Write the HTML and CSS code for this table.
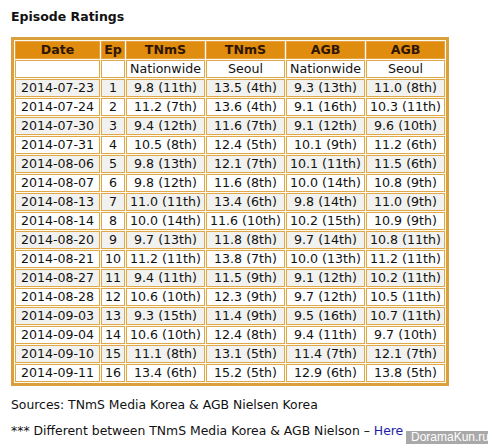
FILE: index.html
```html
<!DOCTYPE html>
<html lang="en">
<head>
  <meta charset="UTF-8" />
  <title>Episode Ratings</title>
  <link rel="stylesheet" href="styles.css">
</head>
<body>
  <div class="page">
    <h3 class="title">Episode Ratings</h3>

    <table class="ratings">
      <tr class="head">
        <th class="c-date">Date</th>
        <th class="c-ep">Ep</th>
        <th class="c-val">TNmS</th>
        <th class="c-val">TNmS</th>
        <th class="c-val">AGB</th>
        <th class="c-val">AGB</th>
      </tr>
      <tr class="sub">
        <td></td>
        <td></td>
        <td>Nationwide</td>
        <td>Seoul</td>
        <td>Nationwide</td>
        <td>Seoul</td>
      </tr>
      <tr class="odd"><td>2014-07-23</td><td>1</td><td>9.8 (11th)</td><td>13.5 (4th)</td><td>9.3 (13th)</td><td>11.0 (8th)</td></tr>
      <tr><td>2014-07-24</td><td>2</td><td>11.2 (7th)</td><td>13.6 (4th)</td><td>9.1 (16th)</td><td>10.3 (11th)</td></tr>
      <tr class="odd"><td>2014-07-30</td><td>3</td><td>9.4 (12th)</td><td>11.6 (7th)</td><td>9.1 (12th)</td><td>9.6 (10th)</td></tr>
      <tr><td>2014-07-31</td><td>4</td><td>10.5 (8th)</td><td>12.4 (5th)</td><td>10.1 (9th)</td><td>11.2 (6th)</td></tr>
      <tr class="odd"><td>2014-08-06</td><td>5</td><td>9.8 (13th)</td><td>12.1 (7th)</td><td>10.1 (11th)</td><td>11.5 (6th)</td></tr>
      <tr><td>2014-08-07</td><td>6</td><td>9.8 (12th)</td><td>11.6 (8th)</td><td>10.0 (14th)</td><td>10.8 (9th)</td></tr>
      <tr class="odd"><td>2014-08-13</td><td>7</td><td>11.0 (11th)</td><td>13.4 (6th)</td><td>9.8 (14th)</td><td>11.0 (9th)</td></tr>
      <tr><td>2014-08-14</td><td>8</td><td>10.0 (14th)</td><td>11.6 (10th)</td><td>10.2 (15th)</td><td>10.9 (9th)</td></tr>
      <tr class="odd"><td>2014-08-20</td><td>9</td><td>9.7 (13th)</td><td>11.8 (8th)</td><td>9.7 (14th)</td><td>10.8 (11th)</td></tr>
      <tr><td>2014-08-21</td><td>10</td><td>11.2 (11th)</td><td>13.8 (7th)</td><td>10.0 (13th)</td><td>11.2 (11th)</td></tr>
      <tr class="odd"><td>2014-08-27</td><td>11</td><td>9.4 (11th)</td><td>11.5 (9th)</td><td>9.1 (12th)</td><td>10.2 (11th)</td></tr>
      <tr><td>2014-08-28</td><td>12</td><td>10.6 (10th)</td><td>12.3 (9th)</td><td>9.7 (12th)</td><td>10.5 (11th)</td></tr>
      <tr class="odd"><td>2014-09-03</td><td>13</td><td>9.3 (15th)</td><td>11.4 (9th)</td><td>9.5 (16th)</td><td>10.7 (11th)</td></tr>
      <tr><td>2014-09-04</td><td>14</td><td>10.6 (10th)</td><td>12.4 (8th)</td><td>9.4 (11th)</td><td>9.7 (10th)</td></tr>
      <tr class="odd"><td>2014-09-10</td><td>15</td><td>11.1 (8th)</td><td>13.1 (5th)</td><td>11.4 (7th)</td><td>12.1 (7th)</td></tr>
      <tr><td>2014-09-11</td><td>16</td><td>13.4 (6th)</td><td>15.2 (5th)</td><td>12.9 (6th)</td><td>13.8 (5th)</td></tr>
    </table>

    <p class="note">Sources: TNmS Media Korea &amp; AGB Nielsen Korea</p>
    <p class="note">*** Different between TNmS Media Korea &amp; AGB Nielson &ndash; <a href="#">Here</a></p>
  </div>

  <div class="watermark">DoramaKun.ru</div>
</body>
</html>
```

FILE: styles.css
```css
body {
  margin: 0;
  padding: 0;
  background: #fff;
  font-family: "DejaVu Sans", Verdana, sans-serif;
  font-size: 13px;
  color: #111;
}

.page {
  padding: 9px 11px 0;
}

.title {
  margin: 0;
  font-size: 12.5px;
  line-height: 16px;
  font-weight: bold;
}

.ratings {
  margin-top: 12px;
  border: 3px solid #d9a03c;
  border-spacing: 1px;
  background: #fffaf0;
  width: 437px;
  table-layout: fixed;
}

.ratings th,
.ratings td {
  border: 1px solid #dfa94a;
  padding: 0;
  height: 16px;
  line-height: 16px;
  text-align: center;
  font-size: 12.6px;
  white-space: nowrap;
  background: #fff;
}

.ratings .head th {
  background: #e08c0e;
  border-color: #e4a245;
  color: #2e1600;
  font-weight: bold;
}

.ratings .odd td {
  background: #f1f1ef;
}

.c-date { width: 83px; }
.c-ep { width: 22px; }
.c-val { width: 77px; }

.note {
  margin: 11px 0 0;
  line-height: 16px;
  font-size: 12.4px;
}

.note + .note {
  margin-top: 10px;
}

.note a {
  color: #1c1caa;
  text-decoration: none;
}

.watermark {
  position: absolute;
  right: 0;
  top: 431px;
  width: 77px;
  height: 13px;
  background: rgba(140, 140, 140, 0.75);
  color: #fff;
  font-family: "Liberation Sans", Arial, sans-serif;
  font-size: 12px;
  line-height: 13px;
  padding-left: 5px;
}
```
